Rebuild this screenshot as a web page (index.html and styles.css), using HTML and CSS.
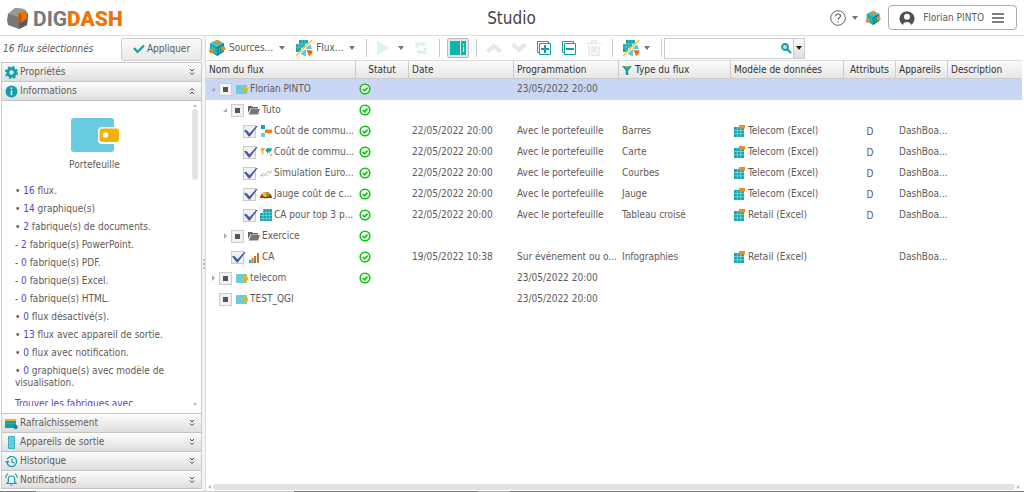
FILE: index.html
```html
<!DOCTYPE html>
<html lang="fr">
<head>
<meta charset="utf-8">
<title>DigDash Studio</title>
<link rel="stylesheet" href="styles.css">
</head>
<body>
<svg class="defs" aria-hidden="true">
  <symbol id="cube" viewBox="0 0 18 18"><path fill="#12a5ab" d="M9 1l7 3.500v8L9 17l-7-4.500v-8z"/><path fill="#3cc3c6" d="M9 1l7 3.500L9 8 2 4.500z"/><path fill="#0b8087" d="M9 8l7-3.500v8L9 17z"/><path stroke="#6fd3d5" stroke-width=".4" fill="none" d="M4.500 6v8M6.700 7v8.500M2 7.500l7 4M2 10l7 4M11.500 7v8M14 6v8M9 11l7-4M9 14l7-4"/><g fill="#f58a1f"><circle cx="9.500" cy="3.200" r="2.300"/><circle cx="3.200" cy="12" r="2.300"/><circle cx="15.300" cy="9.500" r="2.300"/></g></symbol>
  <symbol id="flow" viewBox="0 0 18 18"><path fill="#12a5ab" d="M4 1h9v4h-3v4H6v4H1V5h3z"/><path stroke="#8fdde0" stroke-width=".5" d="M1 8h8M1 5h12M4 5v8M7 1v9M10 1v4"/><path fill="#63c9e0" d="M11 10V4a6.500 6.500 0 0 1 6 6zM11 10v7a7 7 0 0 1-6-4z"/><path fill="#f26a0a" d="M11.500 11l6 .500a6 6 0 0 1-3.500 5.500z"/><path stroke="#fff" stroke-width="2.400" d="M2 17L17 1"/><path stroke="#f4c22b" stroke-width="1.300" d="M1 17L17 1"/></symbol>
  <symbol id="wallet" viewBox="0 0 48 34"><rect width="43" height="34" rx="3" fill="#68cbe0"/><rect x="27" y="9" width="22" height="17" rx="4" fill="#fff"/><rect x="28.500" y="10.500" width="19.500" height="13.500" rx="3" fill="#f3b200"/><circle cx="34.500" cy="17" r="2.700" fill="#fff"/></symbol>
  <symbol id="wallet-s" viewBox="0 0 12 12"><rect y="2" width="11" height="9" rx="1" fill="#68cbe0"/><circle cx="9.300" cy="6.500" r="2.700" fill="#f3b200"/></symbol>
  <symbol id="folder" viewBox="0 0 12 12"><path fill="#666" d="M0 9V2h4l1 1h5v1.500H2.500z"/><path fill="#777" d="M3 5h9l-2 5.500H.8z"/></symbol>
  <symbol id="bars" viewBox="0 0 12 12"><path fill="#12a5ab" d="M1 0h4v4H1z"/><path fill="#f47a1c" d="M5 4.500h7v3.500H5z"/><path fill="#68cbe0" d="M1 8h4v4H1z"/></symbol>
  <symbol id="map" viewBox="0 0 12 12"><path fill="#f5a04a" d="M0 3l2-1 3 0-.500 2L3 5l.5 1.500L3 10 2 7 1.500 4.500z"/><path fill="#12a5ab" d="M6 3l2-1 4 .5-.500 2-1.500 1L9.500 7 8.500 5.500 8 9 7 6 5.500 5z"/><path fill="#f5a04a" d="M10 8h2v1.500h-2z"/></symbol>
  <symbol id="lines" viewBox="0 0 12 12"><path fill="none" stroke="#8ccfd0" stroke-width=".8" d="M0 10l3-4 4 3 5-6"/><path fill="none" stroke="#d8b08c" stroke-width=".8" d="M0 8l4 1 4-5 4 2"/></symbol>
  <symbol id="gauge" viewBox="0 0 12 12"><path fill="#d8201c" d="M0 10a6 6 0 0 1 12 0z"/><path fill="#e8c91c" d="M1.500 6.200A6 6 0 0 1 6.500 4L6 10z"/><path fill="#5fbe2c" d="M6.500 4a6 6 0 0 1 4 2.200L6 10z"/><path stroke="#333" d="M4 9.700h4"/></symbol>
  <symbol id="pivot" viewBox="0 0 12 12"><path fill="#12a5ab" d="M3 0h9v12H3zM0 4h3v8H0z"/><path stroke="#7fd3dc" stroke-width=".7" d="M3 3.500h9M0 6.500h12M0 9.500h12M3.200 0v12M6.200 0v12M9.200 0v12"/></symbol>
  <symbol id="info-g" viewBox="0 0 12 12"><path fill="#12a5ab" d="M1 9h2v3H1zM6 8h2v4H6z"/><path fill="#e06a1c" d="M3.500 7h2v5h-2zM6 5h2v3H6zM9 2h2v10H9z"/></symbol>
  <symbol id="model" viewBox="0 0 12 12"><path fill="#12a5ab" d="M0 2h10v10H0z"/><path stroke="#7fd9e0" stroke-width=".8" d="M0 5.500h10M0 8.800h10M3.300 2v10M6.700 2v10"/><path fill="#f58a1f" d="M5 0h6v3.500H5z"/></symbol>
  <symbol id="ok" viewBox="0 0 12 12"><circle cx="6" cy="6" r="4.800" fill="#fff" stroke="#0ac40f" stroke-width="1.600"/><path fill="none" stroke="#0ac40f" stroke-width="1.600" d="M3.500 6l2 1.800 3-3.200"/></symbol>
  <symbol id="tick" viewBox="0 0 12 12"><path fill="none" stroke="#12a0a6" stroke-width="2.200" d="M1 5l3.500 4L11 2.500"/></symbol>
  <symbol id="more" viewBox="0 0 8 8"><path fill="none" stroke="#444" d="M2 1l2 2 2-2M2 4.500l2 2 2-2"/></symbol>
  <symbol id="less" viewBox="0 0 8 8"><path fill="none" stroke="#444" d="M2 3.500l2-2 2 2M2 7l2-2 2 2"/></symbol>
  <symbol id="tri" viewBox="0 0 6 6"><path fill="currentColor" d="M0 1h6L3 5z"/></symbol>
  <symbol id="open" viewBox="0 0 6 6"><path fill="#aaa" d="M5 1v4H1z"/></symbol>
  <symbol id="shut" viewBox="0 0 6 6"><path fill="#aaa" d="M2 0l3 3-3 3z"/></symbol>
</svg>

<header class="top">
  <div class="logo">
    <svg width="24" height="24" viewBox="0 0 24 24" aria-hidden="true"><path fill="#77787b" d="M2 7l7-6 9 1 4 5-1 11-8 4-11-4-1-5z"/><path fill="#98999b" d="M2 7l7-6 9 1 4 4-9 4z"/><path fill="#5b5c5f" d="M13 10l9-3-1 11-8 4z"/><path fill="#ef7407" d="M13 5l7-1 1 7-6 5-3-3z"/><path fill="#c75a00" d="M13 5l3 4-1 7-3-3z"/></svg>
    <span class="brand">DIG<b>DASH</b></span>
  </div>
  <h1>Studio</h1>
  <div class="account">
    <button class="plain help" aria-label="Aide"><svg width="16" height="16" viewBox="0 0 16 16"><circle cx="8" cy="8" r="7.300" fill="none" stroke="#666"/><path fill="none" stroke="#666" stroke-width="1.200" d="M5.700 6.300c0-3 4.800-3 4.800-.300 0 1.700-2.400 1.700-2.400 3.800M8.100 11v1.300"/></svg><svg class="caret"><use href="#tri"/></svg></button>
    <button class="plain" aria-label="Cube"><svg width="16" height="16"><use href="#cube"/></svg></button>
    <button class="user"><svg width="16" height="16" viewBox="0 0 16 16"><path fill="#505050" d="M4 15A7.500 7.500 0 1 1 12 15C12 11 4 11 4 15z"/><circle cx="8" cy="6.800" r="3" fill="#fff"/></svg><span>Florian PINTO</span><svg width="12" height="12" viewBox="0 0 12 12"><path stroke="#555" stroke-width="1.300" d="M0 2h12M0 6h12M0 10h12"/></svg></button>
  </div>
</header>

<div class="work">
  <aside class="side">
    <div class="apply-row"><em>16 flux sélectionnés</em><button class="apply"><svg width="12" height="12"><use href="#tick"/></svg>Appliquer</button></div>
    <div class="accordion">
      <button class="bar"><svg width="13" height="13" viewBox="0 0 13 13"><circle cx="6.500" cy="6.500" r="3.700" fill="none" stroke="#12a0a6" stroke-width="3"/><circle cx="6.500" cy="6.500" r="5.600" fill="none" stroke="#12a0a6" stroke-width="1.800" stroke-dasharray="2.400 2"/></svg><span>Propriétés</span><svg class="fold"><use href="#more"/></svg></button>
      <button class="bar"><svg width="13" height="13" viewBox="0 0 13 13"><circle cx="6.500" cy="6.500" r="6" fill="#12a0a6"/><path stroke="#fff" stroke-width="1.400" d="M6.500 2.500v1.600M6.500 5.200v5"/></svg><span>Informations</span><svg class="fold"><use href="#less"/></svg></button>
      <div class="info">
        <div class="info-text">
          <figure><svg width="48" height="34"><use href="#wallet"/></svg><figcaption>Portefeuille</figcaption></figure>
          <p>• <a href="#">16</a> flux.</p>
          <p>• <a href="#">14</a> graphique(s)</p>
          <p>• <a href="#">2</a> fabrique(s) de documents.</p>
          <p>- <a href="#">2</a> fabrique(s) PowerPoint.</p>
          <p>- <a href="#">0</a> fabrique(s) PDF.</p>
          <p>- <a href="#">0</a> fabrique(s) Excel.</p>
          <p>- <a href="#">0</a> fabrique(s) HTML.</p>
          <p>• <a href="#">0</a> flux désactivé(s).</p>
          <p>• <a href="#">13</a> flux avec appareil de sortie.</p>
          <p>• <a href="#">0</a> flux avec notification.</p>
          <p>• <a href="#">0</a> graphique(s) avec modèle de visualisation.</p>
          <p class="find"><a href="#">Trouver les fabriques avec</a></p>
        </div>
        <div class="vscroll"><i class="up"></i><b></b><i class="down"></i></div>
      </div>
      <button class="bar"><svg width="13" height="13" viewBox="0 0 13 13"><path fill="#12a0a6" d="M0 2h11v9H0z"/><path fill="#e7b51c" d="M0 2h11v2H0z"/><path stroke="#7c9f3c" d="M0 6.500h11"/><circle cx="10.500" cy="10" r="2.200" fill="#2b7f9a"/></svg><span>Rafraîchissement</span><svg class="fold"><use href="#more"/></svg></button>
      <button class="bar"><svg width="13" height="13" viewBox="0 0 13 13"><path fill="#68cbe0" stroke="#12a0a6" stroke-dasharray="2 1" d="M3.500 .5h6v12h-6z"/></svg><span>Appareils de sortie</span><svg class="fold"><use href="#more"/></svg></button>
      <button class="bar"><svg width="13" height="13" viewBox="0 0 13 13"><path fill="none" stroke="#12a0a6" stroke-width="1.200" d="M2 8.500a5 5 0 1 0 0-4M7 3.500v3.500l2.500 1"/><path fill="#12a0a6" d="M0 6h4.500L2.200 9z"/></svg><span>Historique</span><svg class="fold"><use href="#more"/></svg></button>
      <button class="bar"><svg width="13" height="13" viewBox="0 0 13 13"><path fill="none" stroke="#12a0a6" stroke-width="1.200" d="M2 10.500h9L9.700 9V6c0-4-6.400-4-6.400 0v3zM5.500 12h2M.6 5C.7 3 1.500 1.500 3 .7M12.400 5C12.300 3 11.500 1.500 10 .7"/></svg><span>Notifications</span><svg class="fold"><use href="#more"/></svg></button>
    </div>
  </aside>
  <div class="split"><i></i><i></i><i></i></div>

  <main class="main">
    <div class="toolbar" role="toolbar">
      <button class="plain menu"><svg width="18" height="18"><use href="#cube"/></svg>Sources...<svg class="caret"><use href="#tri"/></svg></button>
      <button class="plain menu"><svg width="18" height="18"><use href="#flow"/></svg>Flux...<svg class="caret"><use href="#tri"/></svg></button>
      <i class="sep"></i>
      <button class="plain run" aria-label="Exécuter"><svg width="13" height="14" viewBox="0 0 13 14"><path fill="#dff7e2" d="M0 0l13 7-13 7z"/></svg><svg class="caret"><use href="#tri"/></svg></button>
      <button class="plain refresh" aria-label="Actualiser"><svg width="14" height="14" viewBox="0 0 14 14"><circle cx="7" cy="7" r="4.500" fill="none" stroke="#d9f0f0" stroke-width="3" stroke-dasharray="11 3"/><path fill="#e3f1ea" d="M0 1h5v5zM14 13H9V8z"/></svg></button>
      <i class="sep"></i>
      <button class="pressed" aria-label="Panneau" aria-pressed="true"><svg width="16" height="14" viewBox="0 0 16 14"><path fill="#0ab5ab" d="M0 0h10v14H0zM11 0h5v14h-5z"/><path stroke="#d9f7f5" stroke-width="1.200" d="M13.500 3v1.500M13.500 6v5"/></svg></button>
      <i class="sep"></i>
      <div class="tools">
        <button class="plain tool" aria-label="Monter"><svg width="16" height="10" viewBox="0 0 16 10"><path fill="none" stroke="#e6e6e6" stroke-width="4" d="M1.500 8.500L8 3l6.500 5.500"/></svg></button>
        <button class="plain tool" aria-label="Descendre"><svg width="16" height="10" viewBox="0 0 16 10"><path fill="none" stroke="#e6e6e6" stroke-width="4" d="M1.500 1.500L8 7l6.500-5.500"/></svg></button>
        <button class="plain tool" aria-label="Déplier"><svg width="14" height="14" viewBox="0 0 14 14"><path fill="#fff" stroke="#12a0a6" d="M2.500 2.500h11v11h-11zM2 11.500H.5V.5h11V2"/><path stroke="#12a0a6" stroke-width="2" d="M4 8h8M8 4v8"/></svg></button>
        <button class="plain tool" aria-label="Replier"><svg width="14" height="14" viewBox="0 0 14 14"><path fill="#fff" stroke="#12a0a6" d="M2.500 2.500h11v11h-11zM2 11.500H.5V.5h11V2"/><path stroke="#12a0a6" stroke-width="2" d="M4 8h8"/></svg></button>
        <button class="plain tool" aria-label="Supprimer"><svg width="14" height="16" viewBox="0 0 14 16"><path fill="none" stroke="#e8e8e8" stroke-width="1.600" d="M0 3.500h14M5 3V1h4v2M2 6v9h10V6M5 6v7M7 6v7M9 6v7"/></svg></button>
      </div>
      <i class="sep"></i>
      <button class="plain view" aria-label="Affichage"><svg width="18" height="18"><use href="#flow"/></svg><svg class="caret"><use href="#tri"/></svg></button>
      <i class="sep"></i>
      <div class="search"><input type="text" aria-label="Rechercher"><svg width="11" height="11" viewBox="0 0 11 11"><circle cx="4" cy="4" r="3" fill="#a9e4ea" stroke="#12a0a6" stroke-width="1.800"/><path stroke="#12a0a6" stroke-width="2.200" d="M6.500 6.500l3.500 3.500"/></svg><button aria-label="Options"><svg class="caret dark"><use href="#tri"/></svg></button></div>
    </div>

    <div class="grid">
      <table>
        <colgroup><col class="c-name"><col class="c-stat"><col class="c-date"><col class="c-prog"><col class="c-type"><col class="c-model"><col class="c-attr"><col class="c-dev"><col></colgroup>
        <thead><tr><th>Nom du flux</th><th class="mid">Statut</th><th>Date</th><th>Programmation</th><th><span class="cell"><svg width="10" height="10" viewBox="0 0 10 10"><path fill="#12a0a6" d="M0 1h10L6.300 5.500V10H3.700V5.500z"/><path fill="#9bbf3c" d="M2 1h6L5 3z"/></svg>Type du flux</span></th><th>Modèle de données</th><th class="mid">Attributs</th><th>Appareils</th><th>Description</th></tr></thead>
        <tbody>
          <tr class="selected"><td><label class="node"><svg class="twist"><use href="#open"/></svg><input type="checkbox" class="partial"><svg class="ico"><use href="#wallet-s"/></svg><span>Florian PINTO</span></label></td><td><svg class="ok"><use href="#ok"/></svg></td><td></td><td>23/05/2022 20:00</td><td></td><td></td><td></td><td></td><td></td></tr>
          <tr><td><label class="node l2"><svg class="twist"><use href="#open"/></svg><input type="checkbox" class="partial"><svg class="ico"><use href="#folder"/></svg><span>Tuto</span></label></td><td><svg class="ok"><use href="#ok"/></svg></td><td></td><td></td><td></td><td></td><td></td><td></td><td></td></tr>
          <tr><td><label class="node l3"><svg class="twist"></svg><input type="checkbox" checked><svg class="ico"><use href="#bars"/></svg><span>Coût de commu...</span></label></td><td><svg class="ok"><use href="#ok"/></svg></td><td>22/05/2022 20:00</td><td>Avec le portefeuille</td><td>Barres</td><td><span class="cell"><svg class="ico"><use href="#model"/></svg>Telecom (Excel)</span></td><td class="mid">D</td><td>DashBoa...</td><td></td></tr>
          <tr><td><label class="node l3"><svg class="twist"></svg><input type="checkbox" checked><svg class="ico"><use href="#map"/></svg><span>Coût de commu...</span></label></td><td><svg class="ok"><use href="#ok"/></svg></td><td>22/05/2022 20:00</td><td>Avec le portefeuille</td><td>Carte</td><td><span class="cell"><svg class="ico"><use href="#model"/></svg>Telecom (Excel)</span></td><td class="mid">D</td><td>DashBoa...</td><td></td></tr>
          <tr><td><label class="node l3"><svg class="twist"></svg><input type="checkbox" checked><svg class="ico"><use href="#lines"/></svg><span>Simulation Euro...</span></label></td><td><svg class="ok"><use href="#ok"/></svg></td><td>22/05/2022 20:00</td><td>Avec le portefeuille</td><td>Courbes</td><td><span class="cell"><svg class="ico"><use href="#model"/></svg>Telecom (Excel)</span></td><td class="mid">D</td><td>DashBoa...</td><td></td></tr>
          <tr><td><label class="node l3"><svg class="twist"></svg><input type="checkbox" checked><svg class="ico"><use href="#gauge"/></svg><span>Jauge coût de c...</span></label></td><td><svg class="ok"><use href="#ok"/></svg></td><td>22/05/2022 20:00</td><td>Avec le portefeuille</td><td>Jauge</td><td><span class="cell"><svg class="ico"><use href="#model"/></svg>Telecom (Excel)</span></td><td class="mid">D</td><td>DashBoa...</td><td></td></tr>
          <tr><td><label class="node l3"><svg class="twist"></svg><input type="checkbox" checked><svg class="ico"><use href="#pivot"/></svg><span>CA pour top 3 p...</span></label></td><td><svg class="ok"><use href="#ok"/></svg></td><td>22/05/2022 20:00</td><td>Avec le portefeuille</td><td>Tableau croisé</td><td><span class="cell"><svg class="ico"><use href="#model"/></svg>Retail (Excel)</span></td><td class="mid">D</td><td>DashBoa...</td><td></td></tr>
          <tr><td><label class="node l2"><svg class="twist"><use href="#shut"/></svg><input type="checkbox" class="partial"><svg class="ico"><use href="#folder"/></svg><span>Exercice</span></label></td><td><svg class="ok"><use href="#ok"/></svg></td><td></td><td></td><td></td><td></td><td></td><td></td><td></td></tr>
          <tr><td><label class="node l2"><svg class="twist"></svg><input type="checkbox" checked><svg class="ico"><use href="#info-g"/></svg><span>CA</span></label></td><td><svg class="ok"><use href="#ok"/></svg></td><td>19/05/2022 10:38</td><td>Sur événement ou o...</td><td>Infographies</td><td><span class="cell"><svg class="ico"><use href="#model"/></svg>Retail (Excel)</span></td><td></td><td>DashBoa...</td><td></td></tr>
          <tr><td><label class="node"><svg class="twist"><use href="#shut"/></svg><input type="checkbox" class="partial"><svg class="ico"><use href="#wallet-s"/></svg><span>telecom</span></label></td><td><svg class="ok"><use href="#ok"/></svg></td><td></td><td>23/05/2022 20:00</td><td></td><td></td><td></td><td></td><td></td></tr>
          <tr><td><label class="node"><svg class="twist"></svg><input type="checkbox" class="partial"><svg class="ico"><use href="#wallet-s"/></svg><span>TEST_QGI</span></label></td><td></td><td></td><td>23/05/2022 20:00</td><td></td><td></td><td></td><td></td><td></td></tr>
        </tbody>
      </table>
    </div>
    <div class="hscroll"><i class="left"></i><b></b><i class="right"></i></div>
  </main>
</div>
<div class="edge"></div>
</body>
</html>
```

FILE: styles.css
```css
* { box-sizing: border-box; }

body {
  margin: 0;
  height: 100vh;
  display: flex;
  flex-direction: column;
  overflow: hidden;
  background: #fff;
  color: #5e5a5a;
  font: 10px/12px "DejaVu Sans Condensed", "DejaVu Sans", sans-serif;
}

button, input { font: inherit; color: inherit; }
button { display: flex; align-items: center; padding: 0; cursor: pointer; }
svg { flex: none; display: block; }
.defs { position: absolute; width: 0; height: 0; }
.plain { border: 0; background: none; }
.caret { width: 6px; height: 6px; color: #777; }
.caret.dark { color: #222; }

/* header */
.top {
  display: grid;
  grid-template-columns: 1fr auto 1fr;
  align-items: center;
  height: 36px;
  padding: 0 7px 0 6px;
  border-bottom: 1px solid #ddd;
}
.logo { display: flex; align-items: center; gap: 3px; padding-top: 2px; }
.brand { font: 700 21px/24px Roboto, sans-serif; color: #77787b; }
.brand b { color: #ef7407; }
.top h1 { margin: 0; font-size: 17px; line-height: 24px; font-weight: 400; color: #444; }
.account { display: flex; align-items: center; justify-content: flex-end; gap: 7px; }
.help { gap: 6px; }
.user {
  gap: 8px;
  height: 25px;
  padding: 0 12px 0 10px;
  border: 1px solid #aaa;
  border-radius: 4px;
  background: #fff;
}

/* left panel */
.work { flex: 1; display: flex; min-height: 0; }
.side { width: 202px; display: flex; flex-direction: column; padding-left: 1px; }
.apply-row { display: flex; align-items: center; justify-content: space-between; height: 26px; padding: 2px 0 2px 2px; }
.apply {
  justify-content: center;
  gap: 2px;
  width: 81px;
  height: 23px;
  border: 1px solid #ccc;
  border-radius: 2px;
  background: linear-gradient(#fafafa, #e8e8e8);
}
.accordion {
  flex: 1;
  display: flex;
  flex-direction: column;
  min-height: 0;
  margin-bottom: 2px;
  border: 1px solid #ccc;
  border-width: 0 1px;
}
.bar {
  flex: none;
  gap: 2px;
  height: 19px;
  padding: 0 5px 0 3px;
  border: 0;
  border-top: 1px solid #c4c4c4;
  background: linear-gradient(#fcfcfc, #dedede);
  text-align: left;
}
.bar:last-child { border-bottom: 1px solid #c4c4c4; }
.bar span { flex: 1; }
.fold { width: 8px; height: 8px; }
.info { flex: 1; display: flex; min-height: 0; padding: 3px 3px 7px 0; border-top: 1px solid #c4c4c4; }
.info-text { flex: 1; overflow: hidden; padding: 14px 4px 0 13px; }
.info figure { margin: 0 14px 14px 0; display: flex; flex-direction: column; align-items: center; gap: 7px; }
.info p { margin: 0 0 6px; }
.info .find { margin-top: 9px; }
.info a { color: #5a3fd6; text-decoration: none; }
.vscroll, .hscroll { display: flex; align-items: center; }
.vscroll { flex-direction: column; width: 6px; }
.vscroll b { width: 6px; height: 71px; margin: 2px 0 auto; border-radius: 3px; background: #e4e4e4; }
.vscroll i, .hscroll i { border: 2px solid transparent; }
.vscroll .up { border-bottom: 3px solid #bbb; border-top: 0; }
.vscroll .down { border-top: 3px solid #bbb; border-bottom: 0; }

.split {
  width: 4px;
  display: flex;
  flex-direction: column;
  align-items: center;
  justify-content: center;
  gap: 2px;
  border-right: 1px solid #ddd;
  background: #f4f4f4;
}
.split i { width: 2px; height: 2px; background: #bbb; }

/* toolbar */
.main { flex: 1; min-width: 0; display: flex; flex-direction: column; padding-right: 2px; }
.toolbar { display: flex; align-items: center; height: 24px; padding-left: 2px; }
.menu { gap: 3px; margin-right: 10px; }
.menu .caret { margin-left: 3px; }
.menu + .menu { margin-right: 11px; }
.sep { width: 1px; height: 18px; background: #c8c8c8; }
.run { gap: 8px; margin: 0 10px; }
.refresh { margin-right: 11px; }
.tools { display: flex; margin: 0 6px 0 4px; }
.tool { justify-content: center; width: 25px; height: 20px; }
.pressed {
  justify-content: center;
  width: 22px;
  height: 20px;
  margin: 0 7px;
  border: 1px solid #bbb;
  border-radius: 2px;
  background: #e6e6e6;
}
.view { gap: 4px; margin: 0 11px 0 9px; }
.search { display: flex; align-items: center; width: 141px; height: 21px; margin-left: 2px; border: 1px solid #ccc; }
.search input { flex: 1; min-width: 0; border: 0; outline: 0; background: none; }
.search button {
  justify-content: center;
  width: 11px;
  height: 19px;
  margin-left: 1px;
  border: 0;
  border-left: 1px solid #ccc;
  background: linear-gradient(#fafafa, #ddd);
}

/* flow table */
.grid { flex: 1; min-height: 0; overflow: hidden; }
table { width: 100%; table-layout: fixed; border-collapse: separate; border-spacing: 0; }
.c-name { width: 150px; }
.c-stat { width: 53px; }
.c-date { width: 105px; }
.c-prog { width: 105px; }
.c-type { width: 112px; }
.c-model { width: 113px; }
.c-attr { width: 52px; }
.c-dev { width: 52px; }
th, td { padding: 0 0 0 3px; overflow: hidden; white-space: nowrap; text-align: left; }
th {
  height: 19px;
  border: 1px solid #ccc;
  border-width: 1px 1px 1px 0;
  border-color: #ddd #ccc #ccc;
  background: linear-gradient(#fafafa, #e6e6e6);
  color: #333;
  font-weight: 400;
}
th:last-child { border-right: 0; }
td { height: 21px; padding-bottom: 1px; }
th.mid, td.mid { text-align: center; padding: 0; }
.selected td { background: #c9d7f4; }
.cell { display: flex; align-items: center; gap: 2px; }
th .cell { gap: 3px; }
.node { display: flex; align-items: center; height: 19px; padding-left: 1px; }
.node.l2 { padding-left: 13px; }
.node.l3 { padding-left: 25px; }
.twist { width: 6px; height: 6px; margin-right: 3px; }
.ico { width: 12px; height: 12px; }
.node .ico { margin: 0 2px 0 4px; }
.ok { width: 12px; height: 12px; }
input[type="checkbox"] {
  flex: none;
  display: grid;
  place-items: center;
  appearance: none;
  width: 13px;
  height: 13px;
  margin: 0;
  border: 1px solid #ccc;
  background: #f1f1f1;
}
.partial::before { content: ""; width: 5px; height: 5px; background: #555; }
input[type="checkbox"]:checked::before {
  content: "";
  width: 14px;
  height: 11px;
  background: #4858a4;
  clip-path: polygon(0 45%, 15% 38%, 40% 70%, 90% 0, 100% 0, 42% 100%, 34% 100%);
}

.hscroll { height: 8px; gap: 2px; padding: 0 2px; }
.hscroll b { flex: 1; height: 6px; border-radius: 3px; background: #e2e2e2; }
.hscroll .left { border-right: 3px solid #bbb; border-left: 0; }
.hscroll .right { border-left: 3px solid #bbb; border-right: 0; }
.edge { flex: none; height: 1px; background: linear-gradient(90deg, #777 3.500%, #ccc 3.500% 28.700%, #777 28.700% 46.700%, #aaa 46.700% 49.800%, #777 49.800%); }
```
